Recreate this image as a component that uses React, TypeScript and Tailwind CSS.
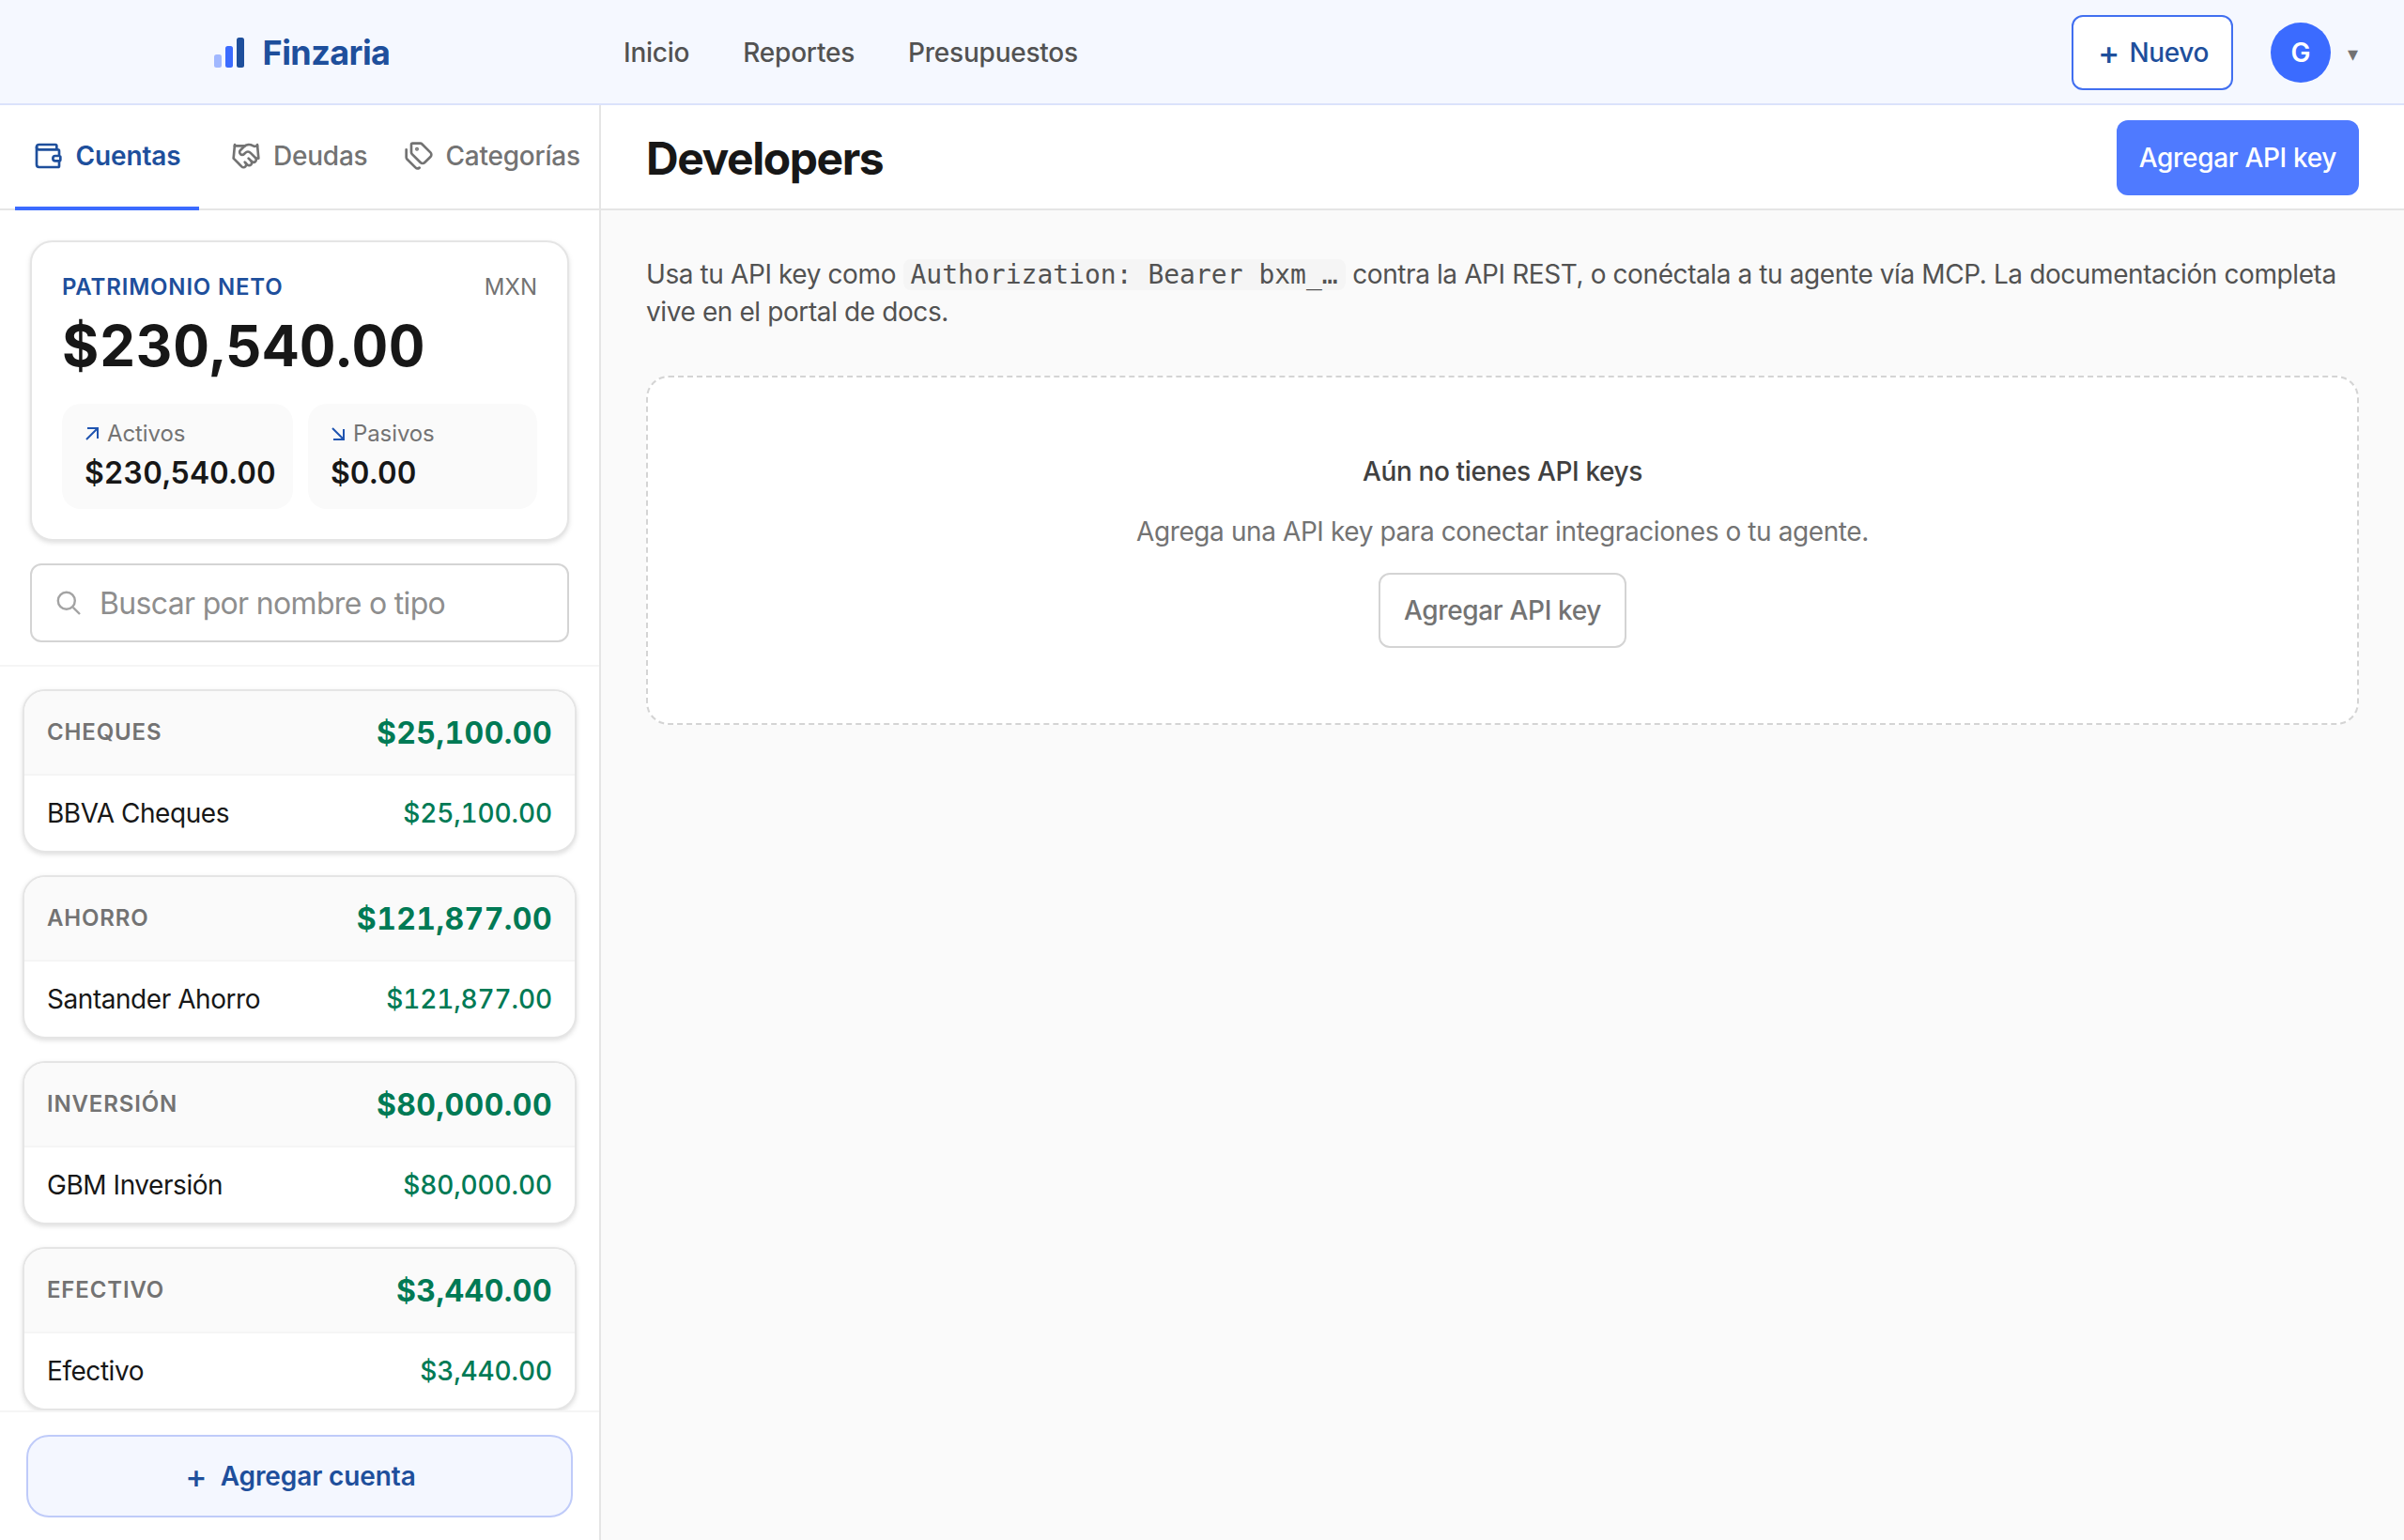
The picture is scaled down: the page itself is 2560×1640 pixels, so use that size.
import { Handshake, Tags, Wallet } from 'lucide-react'

const groups = [
  { type: 'Cheques', total: '$25,100.00', accounts: [{ name: 'BBVA Cheques', balance: '$25,100.00' }] },
  { type: 'Ahorro', total: '$121,877.00', accounts: [{ name: 'Santander Ahorro', balance: '$121,877.00' }] },
  { type: 'Inversión', total: '$80,000.00', accounts: [{ name: 'GBM Inversión', balance: '$80,000.00' }] },
  { type: 'Efectivo', total: '$3,440.00', accounts: [{ name: 'Efectivo', balance: '$3,440.00' }] },
]

export default function App() {
  return (
    <div className="flex h-[1640px] w-[2560px] flex-col overflow-hidden bg-neutral-50 font-['Inter',sans-serif] text-[28px] leading-10 text-neutral-900">
      <Header />
      <div className="flex min-h-0 flex-1">
        <Sidebar />
        <Developers />
      </div>
    </div>
  )
}

function Header() {
  return (
    <header className="flex h-28 shrink-0 items-center border-b-2 border-[#dbe2fb] bg-[#f5f8ff] pt-0.5">
      <div className="flex w-160 items-center justify-center gap-5 pl-[3px]">
        <Logo />
        <span className="text-4xl font-bold tracking-[-0.016em] text-[#1e4f9c]">Finzaria</span>
      </div>
      <nav className="ml-6 flex gap-[57px] font-medium tracking-[-0.008em] text-neutral-600">
        <a>Inicio</a>
        <a>Reportes</a>
        <a>Presupuestos</a>
      </nav>
      <div className="ml-auto flex items-center pr-12">
        <button className="flex h-20 w-43 items-center justify-center gap-2.5 rounded-xl border-2 border-[#416ff0] bg-white pl-0.5 font-medium text-[#1e4f9c]">
          <span className="text-[35px]">+</span>
          <span className="tracking-[-0.014em]">Nuevo</span>
        </button>
        <div className="ml-10 flex size-16 items-center justify-center rounded-full bg-[#3b6bff] font-semibold text-white">
          G
        </div>
        <span className="ml-4 mt-0.5 w-3.5 text-center text-[22px] text-neutral-500">▾</span>
      </div>
    </header>
  )
}

function Logo() {
  return (
    <svg width="32" height="32" viewBox="0 0 32 32">
      <rect x="0" y="18" width="8" height="14" rx="2.5" fill="#3b6bff" opacity="0.45" />
      <rect x="12" y="9" width="8" height="23" rx="2.5" fill="#3b6bff" />
      <rect x="24" y="0" width="8" height="32" rx="2.5" fill="#1e4f9c" />
    </svg>
  )
}

function Sidebar() {
  return (
    <aside className="flex w-160 shrink-0 flex-col border-r-2 border-neutral-200 bg-white">
      <div className="flex h-28 shrink-0 border-b-2 border-neutral-200 pl-4">
        <div className="-mb-0.5 flex w-49 items-center justify-center gap-[13px] border-b-4 border-[#3b6bff] font-semibold tracking-[-0.004em] text-[#1e4f9c]">
          <Wallet size={32} strokeWidth={2} />
          Cuentas
        </div>
        <div className="-mb-0.5 ml-[34px] flex items-center gap-[13px] border-b-4 border-transparent font-medium tracking-[-0.008em] text-neutral-500">
          <Handshake size={32} strokeWidth={2} />
          Deudas
        </div>
        <div className="-mb-0.5 ml-[39px] flex items-center gap-3 border-b-4 border-transparent font-medium tracking-[-0.008em] text-neutral-500">
          <Tags size={32} strokeWidth={2} />
          Categorías
        </div>
      </div>

      <div className="flex shrink-0 flex-col gap-6 border-b-2 border-neutral-100 px-8 pb-6 pt-8">
        <NetWorth />
        <div className="flex h-21 items-center rounded-xl border-2 border-neutral-300 pl-[26px] text-[32px] text-[#8e8e8e]">
          <SearchIcon />
          <span className="ml-5 pt-0.5 tracking-[-0.021em]">Buscar por nombre o tipo</span>
        </div>
      </div>

      <div className="flex min-h-0 flex-1 flex-col gap-6 overflow-hidden px-6 pt-6">
        {groups.map((group) => (
          <AccountGroup key={group.type} {...group} />
        ))}
      </div>

      <div className="shrink-0 border-t-2 border-neutral-100 px-7 py-6">
        <button className="flex h-22 w-full items-center justify-center gap-3.5 rounded-3xl border-2 border-[#bfcbf9] bg-[#f4f7ff] pl-0.5 font-semibold text-[#1e4f9c]">
          <span className="text-[35px] font-medium">+</span>
          <span className="tracking-[-0.004em]">Agregar cuenta</span>
        </button>
      </div>
    </aside>
  )
}

function NetWorth() {
  return (
    <section className="h-80 rounded-3xl border-2 border-neutral-200 bg-white px-8 pt-8 shadow-[0_2px_6px_rgba(0,0,0,0.08),0_2px_4px_rgba(0,0,0,0.06)]">
      <div className="flex h-8 items-center justify-between text-2xl">
        <span className="font-semibold tracking-[0.034em] text-[#1e4f9c]">PATRIMONIO NETO</span>
        <span className="text-neutral-500">MXN</span>
      </div>
      <div className="mt-2 h-[76px] text-[60px] font-bold leading-[76px] tracking-[0.008em] tabular-nums">
        $230,540.00
      </div>
      <div className="mt-6 grid grid-cols-[246px_1fr] gap-4">
        <Stat arrow="M2 1h11v11M13 1 1 13" label="Activos" value="$230,540.00" />
        <Stat arrow="M2 13h11V2M13 13 1 1" label="Pasivos" value="$0.00" />
      </div>
    </section>
  )
}

function Stat({ arrow, label, value }: { arrow: string; label: string; value: string }) {
  return (
    <div className="h-[112px] rounded-[20px] bg-neutral-50 pl-[25px] pt-4">
      <div className="flex h-8 items-center gap-[9px] text-2xl text-neutral-500">
        <svg width="14" height="14" viewBox="0 0 14 14" fill="none" stroke="#1f54b0" strokeWidth="2">
          <path d={arrow} />
        </svg>
        <span className="tracking-[-0.004em]">{label}</span>
      </div>
      <div className="-ml-px mt-1 text-[32px] font-semibold leading-11 tabular-nums">{value}</div>
    </div>
  )
}

function SearchIcon() {
  return (
    <svg width="26" height="26" viewBox="0 0 26 26" fill="none" stroke="#a3a3a3" strokeWidth="2.4">
      <circle cx="10.8" cy="10.8" r="9" />
      <path d="M17.8 17.8 25 25" />
    </svg>
  )
}

type Account = { name: string; balance: string }

function AccountGroup({ type, total, accounts }: { type: string; total: string; accounts: Account[] }) {
  return (
    <section className="shrink-0 overflow-hidden rounded-3xl border-2 border-neutral-200 bg-white shadow-[0_2px_6px_rgba(0,0,0,0.08),0_2px_4px_rgba(0,0,0,0.06)]">
      <div className="flex h-[90px] items-center justify-between border-b-2 border-neutral-100 bg-neutral-50 px-6">
        <span className="text-2xl font-semibold uppercase tracking-[0.035em] text-neutral-500">{type}</span>
        <span className="pt-0.5 text-[32px] font-bold tracking-[0.013em] tabular-nums text-[#007a55]">{total}</span>
      </div>
      {accounts.map((account) => (
        <div key={account.name} className="flex h-20 items-center justify-between px-6">
          <span className="tracking-[-0.016em]">{account.name}</span>
          <span className="font-medium tracking-[-0.005em] tabular-nums text-[#007a55]">{account.balance}</span>
        </div>
      ))}
    </section>
  )
}

function Developers() {
  return (
    <main className="flex min-w-0 flex-1 flex-col">
      <div className="flex h-28 shrink-0 items-center justify-between border-b-2 border-neutral-200 bg-white px-12 pt-0.5">
        <h1 className="pt-0.5 text-5xl font-bold tracking-[-0.03em]">Developers</h1>
        <button className="h-20 rounded-xl bg-[#4f7aff] px-6 font-medium tracking-[-0.012em] text-white">
          Agregar API key
        </button>
      </div>
      <div className="px-12 pt-12">
        <p className="tracking-[-0.0143em] text-neutral-600">
          Usa tu API key como{' '}
          <code className="rounded-lg bg-neutral-100 px-2 font-['DejaVu_Sans_Mono',monospace] leading-none tracking-normal">
            Authorization: Bearer bxm_…
          </code>{' '}
          contra la API REST, o conéctala a tu agente vía MCP. La documentación completa vive en el portal de docs.
        </p>
        <div className="mt-12 flex flex-col items-center gap-6 rounded-3xl border-2 border-dashed border-neutral-300 bg-white py-20">
          <p className="font-medium tracking-[-0.013em] text-neutral-700">Aún no tienes API keys</p>
          <p className="tracking-[-0.0145em] text-neutral-500">
            Agrega una API key para conectar integraciones o tu agente.
          </p>
          <button className="h-20 w-66 rounded-xl border-2 border-neutral-300 bg-white font-medium tracking-[-0.012em] text-neutral-500">
            Agregar API key
          </button>
        </div>
      </div>
    </main>
  )
}
